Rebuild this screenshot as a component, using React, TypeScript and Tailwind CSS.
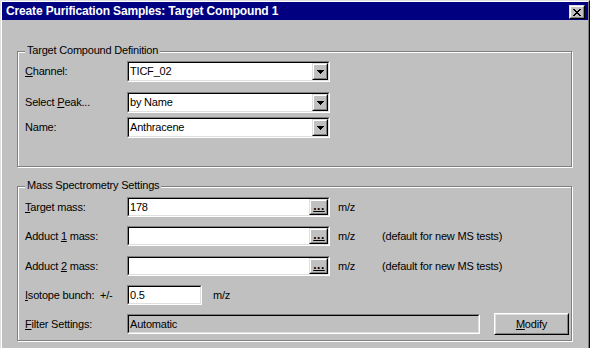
import React from "react";

const Sunken = ({
  className,
  inner,
  children,
}: {
  className: string;
  inner: string;
  children?: React.ReactNode;
}) => (
  <div
    className={`border border-t-[#808080] border-l-[#808080] border-r-white border-b-white ${className}`}
  >
    <div
      className={`h-full border border-t-black border-l-black border-r-[#dfdfdf] border-b-[#dfdfdf] flex items-center ${inner}`}
    >
      {children}
    </div>
  </div>
);

const Raised = ({
  className,
  children,
}: {
  className: string;
  children?: React.ReactNode;
}) => (
  <div
    className={`border border-t-[#dfdfdf] border-l-[#dfdfdf] border-r-black border-b-black ${className}`}
  >
    <div className="h-full border border-t-white border-l-white border-r-[#808080] border-b-[#808080] bg-[#c0c0c0] flex items-center justify-center">
      {children}
    </div>
  </div>
);

const Arrow = () => (
  <svg width="7" height="4" viewBox="0 0 7 4" shapeRendering="crispEdges">
    <rect x="0" y="0" width="7" height="1" fill="#000" />
    <rect x="1" y="1" width="5" height="1" fill="#000" />
    <rect x="2" y="2" width="3" height="1" fill="#000" />
    <rect x="3" y="3" width="1" height="1" fill="#000" />
  </svg>
);

const CloseGlyph = () => {
  const px: [number, number][] = [];
  const rows = [
    "XX....XX",
    ".XX..XX.",
    "..XXXX..",
    "...XX...",
    "..XXXX..",
    ".XX..XX.",
    "XX....XX",
  ];
  rows.forEach((r, y) =>
    r.split("").forEach((c, x) => {
      if (c === "X") px.push([x, y]);
    })
  );
  return (
    <svg width="8" height="7" viewBox="0 0 8 7" shapeRendering="crispEdges">
      {px.map(([x, y]) => (
        <rect key={`${x}-${y}`} x={x} y={y} width="1" height="1" fill="#000" />
      ))}
    </svg>
  );
};

const Combo = ({ value }: { value: string }) => (
  <Sunken className="w-[203px] h-[21px]" inner="bg-white">
    <span className="flex-1 pl-[1px] leading-[13px] whitespace-nowrap">{value}</span>
    <Raised className="w-[16px] h-full">
      <Arrow />
    </Raised>
  </Sunken>
);

const MassEdit = ({ value }: { value: string }) => (
  <Sunken className="w-[203px] h-[20px]" inner="bg-white">
    <span className="flex-1 pl-[1px] leading-[13px]">{value}</span>
    <Raised className="w-[19px] h-full">
      <span className="font-bold leading-[10px] underline underline-offset-[1px] text-[12px] tracking-[0.5px] -mt-[2px] pl-[1px]">
        ...
      </span>
    </Raised>
  </Sunken>
);

export default function App() {
  return (
    <div className="w-[590px] h-[348px] overflow-hidden bg-[#c0c0c0] text-black text-[11px] tracking-[-0.2px] font-['Liberation_Sans',Arial,sans-serif]">
      <div className="h-full border-t border-l border-r border-t-[#dfdfdf] border-l-[#dfdfdf] border-r-black">
        <div className="h-full border-t border-l border-r border-t-white border-l-white border-r-[#808080] flex flex-col">
          {/* Title bar */}
          <div className="h-[18px] shrink-0 bg-[#000080] flex items-start justify-between pl-[4px] pr-[3px]">
            <span className="text-white font-bold text-[12px] leading-[18px] tracking-[-0.15px] whitespace-nowrap">
              Create Purification Samples: Target Compound 1
            </span>
            <Raised className="mt-[3px] w-[16px] h-[14px]">
              <CloseGlyph />
            </Raised>
          </div>

          {/* Group 1 */}
          <div className="relative shrink-0 mt-[31px] ml-[15px] w-[555px] h-[116px] border border-[#808080] shadow-[inset_1px_1px_0_#fff,1px_1px_0_#fff] pt-[9px] pl-[7px]">
            <span className="absolute left-[7px] top-[-8px] px-[2px] bg-[#c0c0c0] leading-[13px] whitespace-nowrap">
              Target Compound Definition
            </span>
            <div className="flex items-center h-[21px]">
              <div className="w-[102px] leading-[13px]">
                <u>C</u>hannel:
              </div>
              <Combo value="TICF_02" />
            </div>
            <div className="flex items-center h-[21px] mt-[10px]">
              <div className="w-[102px] leading-[13px]">
                Select <u>P</u>eak...
              </div>
              <Combo value="by Name" />
            </div>
            <div className="flex items-center h-[21px] mt-[4px]">
              <div className="w-[102px] leading-[13px]">Name:</div>
              <Combo value="Anthracene" />
            </div>
          </div>

          {/* Group 2 */}
          <div className="relative shrink-0 mt-[19px] ml-[15px] w-[555px] h-[155px] border border-[#808080] shadow-[inset_1px_1px_0_#fff,1px_1px_0_#fff] pt-[10px] pl-[7px]">
            <span className="absolute left-[7px] top-[-8px] px-[2px] bg-[#c0c0c0] leading-[13px] whitespace-nowrap">
              Mass Spectrometry Settings
            </span>
            <div className="flex items-center h-[20px]">
              <div className="w-[102px] leading-[13px]">
                <u>T</u>arget mass:
              </div>
              <MassEdit value="178" />
              <span className="ml-[8px] w-[44px] leading-[13px]">m/z</span>
            </div>
            <div className="flex items-center h-[20px] mt-[9px]">
              <div className="w-[102px] leading-[13px]">
                Adduct <u>1</u> mass:
              </div>
              <MassEdit value="" />
              <span className="ml-[8px] w-[44px] leading-[13px]">m/z</span>
              <span className="leading-[13px] whitespace-nowrap">(default for new MS tests)</span>
            </div>
            <div className="flex items-center h-[20px] mt-[10px]">
              <div className="w-[102px] leading-[13px]">
                Adduct <u>2</u> mass:
              </div>
              <MassEdit value="" />
              <span className="ml-[8px] w-[44px] leading-[13px]">m/z</span>
              <span className="leading-[13px] whitespace-nowrap">(default for new MS tests)</span>
            </div>
            <div className="flex items-center h-[20px] mt-[9px]">
              <div className="w-[75px] leading-[13px]">
                <u>I</u>sotope bunch:
              </div>
              <div className="w-[27px] leading-[13px]">+/-</div>
              <Sunken className="w-[75px] h-[20px]" inner="bg-white">
                <span className="pl-[1px] leading-[13px]">0.5</span>
              </Sunken>
              <span className="ml-[11px] leading-[13px]">m/z</span>
            </div>
            <div className="flex items-center h-[22px] mt-[8px]">
              <div className="w-[102px] leading-[13px]">
                <u>F</u>ilter Settings:
              </div>
              <Sunken className="w-[353px] h-[20px]" inner="bg-[#c0c0c0]">
                <span className="pl-[1px] leading-[13px]">Automatic</span>
              </Sunken>
              <div className="ml-[14px] w-[75px] h-[22px] border border-t-white border-l-white border-r-black border-b-black">
                <div className="h-full border border-t-[#dfdfdf] border-l-[#dfdfdf] border-r-[#808080] border-b-[#808080] flex items-center justify-center leading-[13px]">
                  <span>
                    <u>M</u>odify
                  </span>
                </div>
              </div>
            </div>
          </div>
        </div>
      </div>
    </div>
  );
}
